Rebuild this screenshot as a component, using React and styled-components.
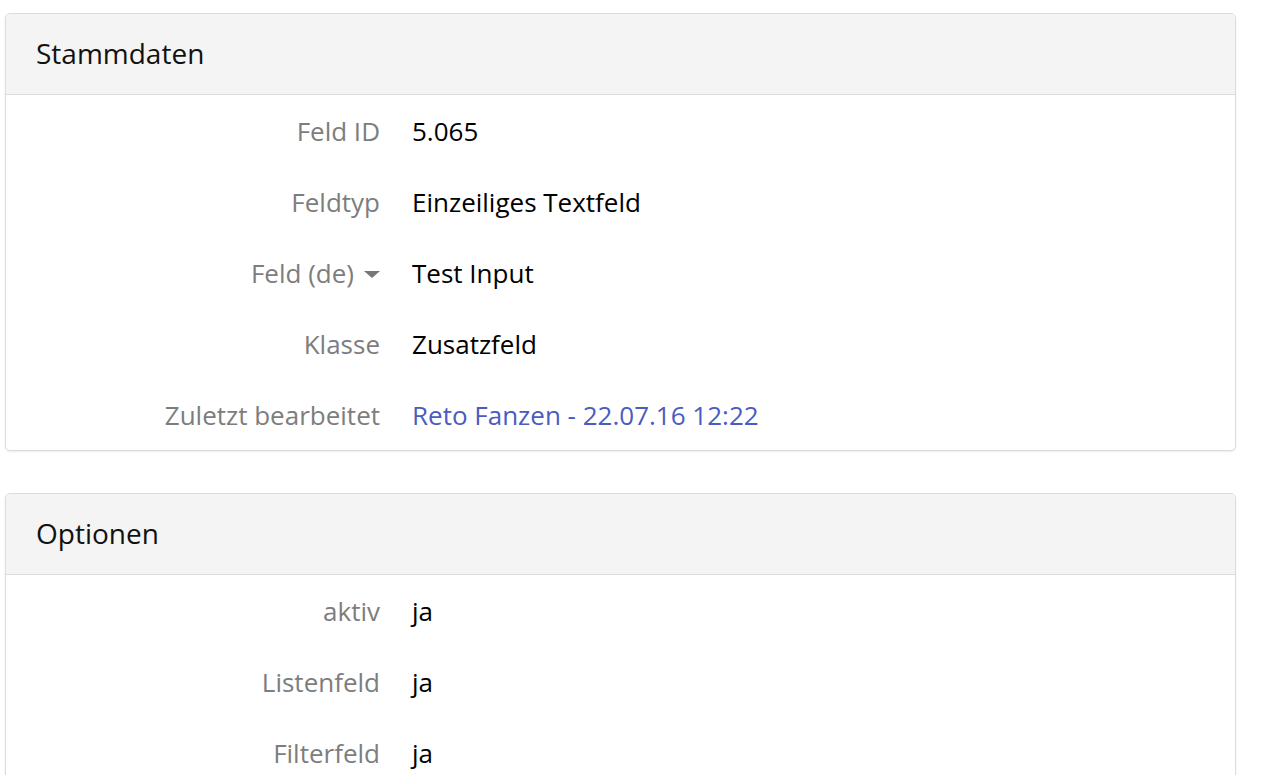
import styled, { createGlobalStyle } from "styled-components";

const GlobalStyle = createGlobalStyle`
    html, body {
        overflow: hidden;
    }
    body {
        margin: 0;
        background: #fff;
        font-family: "Open Sans", "Liberation Sans", sans-serif;
    }
`;

const sections = [
    {
        title: "Stammdaten",
        rows: [
            { label: "Feld ID", value: "5.065" },
            { label: "Feldtyp", value: "Einzeiliges Textfeld" },
            { label: "Feld (de)", value: "Test Input", dropdown: true },
            { label: "Klasse", value: "Zusatzfeld" },
            { label: "Zuletzt bearbeitet", value: "Reto Fanzen - 22.07.16 12:22", link: true },
        ],
    },
    {
        title: "Optionen",
        rows: [
            { label: "aktiv", value: "ja" },
            { label: "Listenfeld", value: "ja" },
            { label: "Filterfeld", value: "ja" },
        ],
    },
];

const Page = styled.div`
    display: flex;
    flex-direction: column;
    gap: 42px;
    padding: 13px 33px 0 5px;
`;

const Panel = styled.section`
    border: 1px solid #dcdcdc;
    border-radius: 5px;
    background: #fff;
    box-shadow: 0 1px 2px rgba(0, 0, 0, 0.08);
    overflow: hidden;
`;

const PanelHeader = styled.header`
    height: 81px;
    box-sizing: border-box;
    padding: 0 30px 2px;
    display: flex;
    align-items: center;
    background: #f4f4f4;
    border-bottom: 1px solid #dcdcdc;
    font-size: 28px;
    color: #111;
`;

const PanelBody = styled.dl`
    display: grid;
    grid-template-columns: 374px 1fr;
    column-gap: 32px;
    row-gap: 39px;
    margin: 0;
    padding: 20px 0 19px;
    font-size: 26px;
    line-height: 32px;
`;

const Label = styled.dt`
    color: #7d7d7d;
    display: flex;
    justify-content: flex-end;
    align-items: center;
    gap: 10px;
`;

const Caret = styled.span`
    width: 0;
    height: 0;
    border-left: 8px solid transparent;
    border-right: 8px solid transparent;
    border-top: 7px solid #777;
    margin-top: 3px;
`;

const Value = styled.dd`
    margin: 0;
    color: ${p => (p.$link ? "#4b5bbf" : "#000")};
`;

export default function App() {
    return (
        <>
            <GlobalStyle />
            <Page>
                {sections.map(s => (
                    <Panel key={s.title}>
                        <PanelHeader>{s.title}</PanelHeader>
                        <PanelBody>
                            {s.rows.map(r => (
                                <div key={r.label} style={{ display: "contents" }}>
                                    <Label>
                                        {r.label}
                                        {r.dropdown && <Caret />}
                                    </Label>
                                    <Value $link={r.link}>{r.value}</Value>
                                </div>
                            ))}
                        </PanelBody>
                    </Panel>
                ))}
            </Page>
        </>
    );
}
